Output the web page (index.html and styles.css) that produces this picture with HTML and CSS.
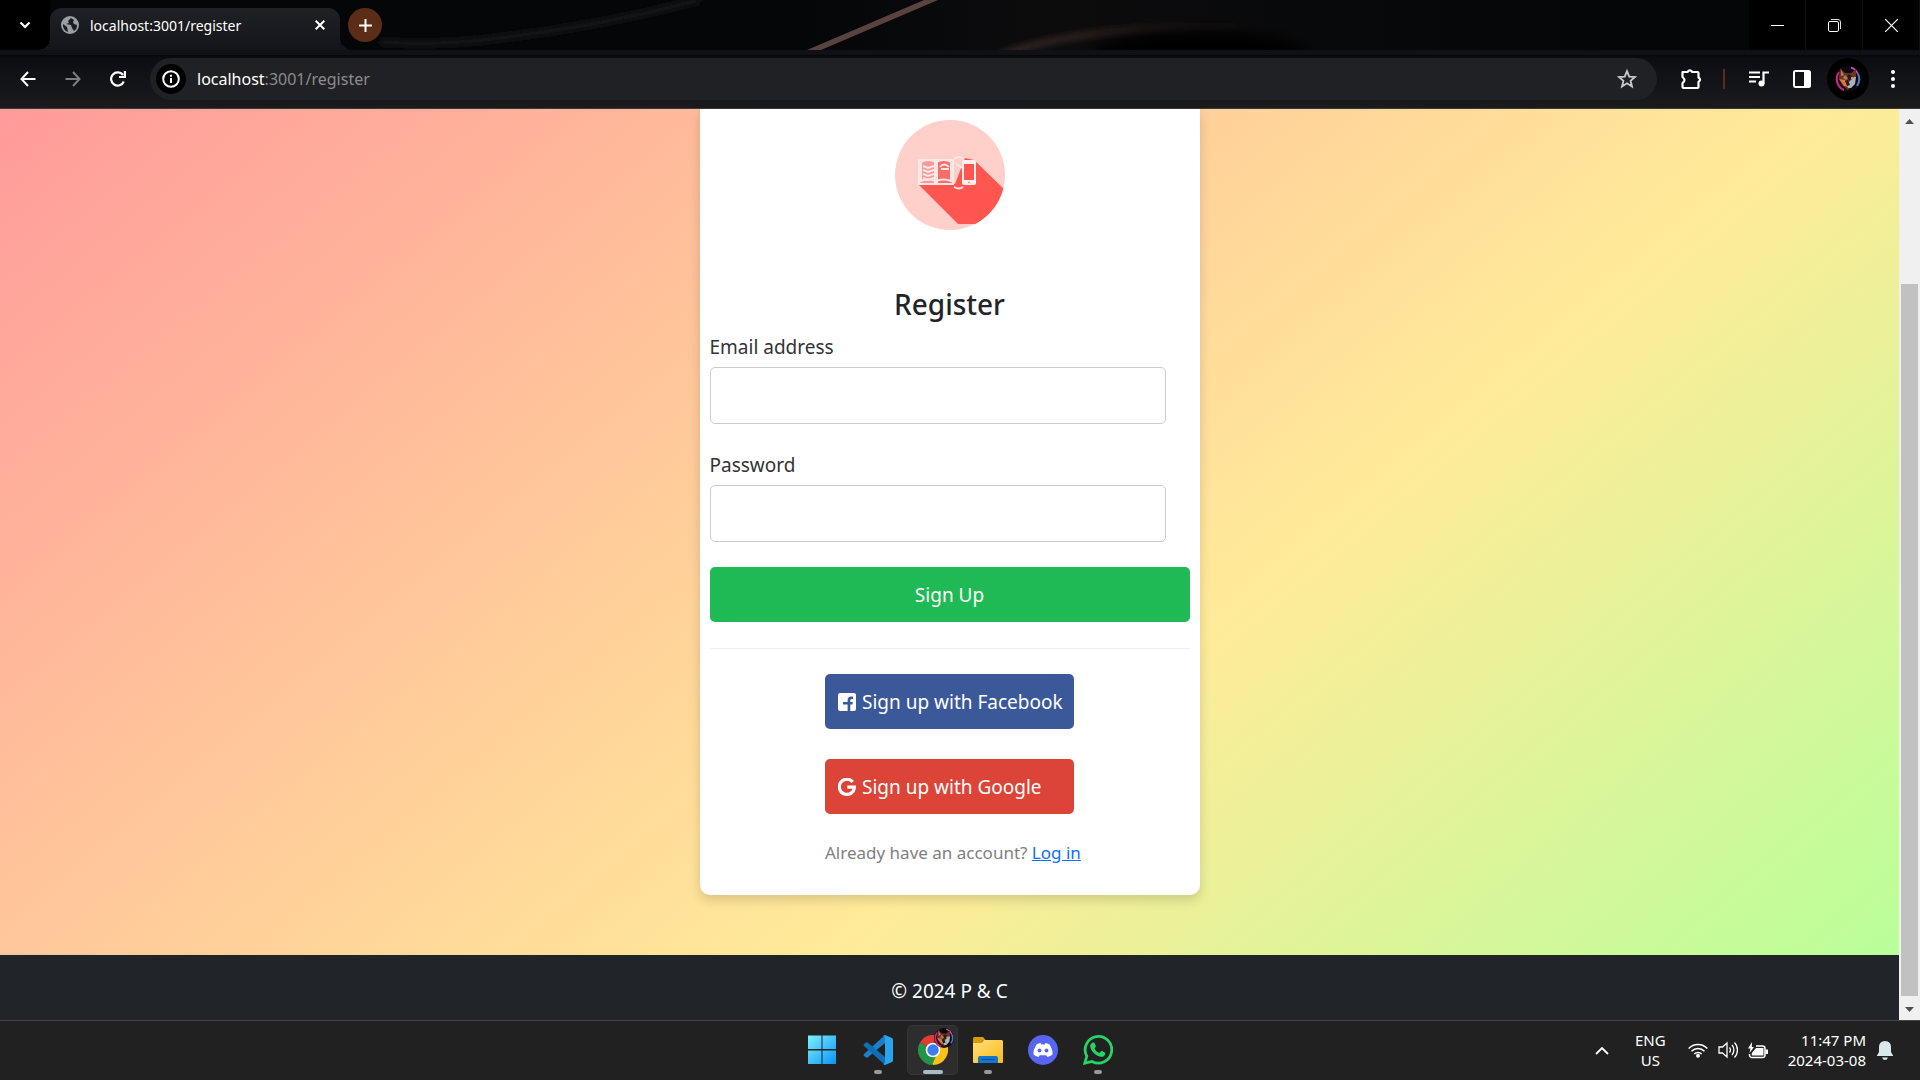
FILE: index.html
```html
<!DOCTYPE html>
<html lang="en">
<head>
<meta charset="utf-8">
<title>localhost:3001/register</title>
<link rel="stylesheet" href="styles.css">
</head>
<body>
<svg class="defs" aria-hidden="true">
  <defs>
    <symbol id="wolf" viewBox="0 0 26 26">
      <circle cx="13" cy="13" r="13" fill="#0d0911"/>
      <path d="M4 6A12 12 0 0 0 9 24" fill="none" stroke="#d8208c" stroke-width="2"/>
      <path d="M16 1.500A12 12 0 0 1 23 8" fill="none" stroke="#e04bc8" stroke-width="1.500"/>
      <path d="M23 8A12 12 0 0 1 22 20" fill="none" stroke="#4a78c8" stroke-width="2"/>
      <path d="M5 2l5 5 6 0 5-4 0 9-3 7-5 5-6-5-3-7z" fill="#6b3526"/>
      <path d="M6 4l3 5-3 1z" fill="#c47a62"/>
      <path d="M4 13l6 1 3 7-4-1z" fill="#e07830"/>
      <path d="M13 8l4 2-2 5-3-3z" fill="#241a20"/>
      <path d="M15 15l4-4 2 0-1 7-4 4-3 0-1-4z" fill="#a9b4ba"/>
      <path d="M10 15l2 5 3-1-2-5z" fill="#2a1c1e"/>
      <path d="M10 9l3 3-2 2-3-2z" fill="#b87850"/>
      <circle cx="17" cy="12" r="1" fill="#f2c32e"/>
    </symbol>
  </defs>
</svg>

<header class="browser">
  <div class="tabstrip">
    <svg class="strip-art" viewBox="0 0 1920 50" preserveAspectRatio="none" aria-hidden="true">
      <defs>
        <filter id="soft" x="-20%" y="-50%" width="140%" height="200%"><feGaussianBlur stdDeviation="3"/></filter>
        <filter id="softer" x="-20%" y="-80%" width="140%" height="260%"><feGaussianBlur stdDeviation="7"/></filter>
        <linearGradient id="sheen" x1="0" x2="1"><stop offset="0" stop-color="#0c0c0d" stop-opacity="0"/><stop offset=".3" stop-color="#0c0c0d"/><stop offset="1" stop-color="#0c0c0d" stop-opacity="0"/></linearGradient>
        <linearGradient id="glow" gradientUnits="userSpaceOnUse" x1="1000" y1="0" x2="1260" y2="0"><stop offset="0" stop-color="#3a2826"/><stop offset="1" stop-color="#3a2826" stop-opacity="0"/></linearGradient>
      </defs>
      <path d="M380 42Q440 46 500 38Q600 26 700 0" fill="none" stroke="#1b1b1d" stroke-width="5" filter="url(#soft)"/>
      <path d="M800 0h800v50H800z" fill="url(#sheen)"/>
      <path d="M1000 56Q1080 24 1260 26" fill="none" stroke="url(#glow)" stroke-width="7" filter="url(#soft)"/>
      <ellipse cx="1200" cy="56" rx="110" ry="24" fill="#000" filter="url(#softer)"/>
      <path d="M807 50L924 0h14L821 50z" fill="#584340"/>
    </svg>
    <button class="icon-btn tab-search" aria-label="Search tabs"><svg width="12" height="8" viewBox="0 0 12 8"><path d="M1.500 1.500L6 6l4.500-4.500" fill="none" stroke="#fff" stroke-width="2.200"/></svg></button>
    <div class="tab">
      <svg width="18" height="18" viewBox="0 0 18 18"><circle cx="9" cy="9" r="9" fill="#9aa0a6"/><path d="M2 8l4 3 1 5c-3-1-5.500-4-5-8zM10 2l-3 3 1 2-3 1 5 1 1 3 2 3c2-1 3-3 3-6l-3-1-1-2 1-2zM13 3l3 4" fill="#1c1d21"/></svg>
      <span class="tab-title">localhost:3001/register</span>
      <button class="icon-btn" aria-label="Close tab"><svg width="10" height="10" viewBox="0 0 10 10"><path d="M.7.7l8.600 8.600M9.300.7L.7 9.300" stroke="#fff" stroke-width="2"/></svg></button>
    </div>
    <button class="icon-btn new-tab" aria-label="New tab"><svg width="13" height="13" viewBox="0 0 13 13"><path d="M6.500 0v13M0 6.500h13" stroke="#fff" stroke-width="2"/></svg></button>
    <div class="window-controls">
      <button class="icon-btn" aria-label="Minimize"><svg width="13" height="13" viewBox="0 0 13 13"><path d="M0 6.500h13" stroke="#fff"/></svg></button>
      <button class="icon-btn" aria-label="Restore"><svg width="13" height="13" viewBox="0 0 13 13"><rect x=".5" y="2.500" width="10" height="10" rx="1.500" fill="none" stroke="#fff"/><path d="M3 .5h7a2.500 2.500 0 0 1 2.500 2.500v7" fill="none" stroke="#ddd"/></svg></button>
      <button class="icon-btn" aria-label="Close"><svg width="13" height="13" viewBox="0 0 13 13"><path d="M0 0l13 13M13 0L0 13" stroke="#fff" stroke-width="1.200"/></svg></button>
    </div>
  </div>

  <div class="toolbar">
    <button class="icon-btn" aria-label="Back"><svg width="16" height="16" viewBox="0 0 16 16"><path d="M15.500 8H2M8 1L1.500 8 8 15" fill="none" stroke="#fff" stroke-width="2"/></svg></button>
    <button class="icon-btn" aria-label="Forward"><svg width="16" height="16" viewBox="0 0 16 16"><path d="M.5 8H14M8 1l6.500 7L8 15" fill="none" stroke="#7d7e80" stroke-width="2"/></svg></button>
    <button class="icon-btn" aria-label="Reload"><svg width="16" height="16" viewBox="0 0 16 16"><path d="M13.800 10.500A6.600 6.600 0 1 1 13 4" fill="none" stroke="#fff" stroke-width="2.200"/><path d="M14.900 0v6H9" fill="none" stroke="#fff" stroke-width="2.200"/></svg></button>
    <div class="address">
      <button class="icon-btn site-info" aria-label="Site information"><svg width="18" height="18" viewBox="0 0 18 18"><circle cx="9" cy="9" r="7.800" fill="none" stroke="#fff" stroke-width="2"/><path d="M9 8v5M9 4.800v1.900" stroke="#fff" stroke-width="2"/></svg></button>
      <div class="url"><span class="host">localhost</span>:3001/register</div>
      <button class="icon-btn" aria-label="Bookmark"><svg width="20" height="20" viewBox="0 0 24 24"><path d="M12 2.500l2.700 6.600 7 .5-5.400 4.500 1.700 6.900-6-3.800-6 3.800 1.700-6.900-5.400-4.500 7-.5z" fill="none" stroke="#c7c8ca" stroke-width="2.200"/></svg></button>
    </div>
    <div class="actions">
      <button class="icon-btn" aria-label="Extensions"><svg width="22" height="22" viewBox="0 0 22 22"><path d="M2.500 4h5q2.400-3.200 4.800 0h5.200q1 0 1 1v4.500q3.200 2.200 0 4.400V19q0 1-1 1h-14q-1 0-1-1v-3.800q4-3.100 0-6.200z" fill="none" stroke="#fff" stroke-width="2.200" stroke-linejoin="round"/></svg></button>
      <span class="divider"></span>
      <button class="icon-btn" aria-label="Media controls"><svg width="20" height="16" viewBox="0 0 20 16"><path d="M0 1.500h11M0 6h11M0 10.500h7" stroke="#fff" stroke-width="2.200"/><circle cx="12.500" cy="12.500" r="3" fill="#fff"/><path d="M14.500 12.500V1.500H20" fill="none" stroke="#fff" stroke-width="2.200"/></svg></button>
      <button class="icon-btn" aria-label="Side panel"><svg width="18" height="18" viewBox="0 0 18 18"><rect x="1" y="1" width="16" height="16" rx="1.500" fill="none" stroke="#fff" stroke-width="2"/><path d="M11 1h6v16h-6z" fill="#fff"/></svg></button>
      <button class="icon-btn profile" aria-label="Profile"><svg width="26" height="26"><use href="#wolf"/></svg></button>
      <button class="icon-btn" aria-label="Menu"><svg width="6" height="18" viewBox="0 0 6 18"><g fill="#fff"><circle cx="3" cy="2" r="2"/><circle cx="3" cy="9" r="2"/><circle cx="3" cy="16" r="2"/></g></svg></button>
    </div>
  </div>
</header>

<div class="viewport">
  <div class="page">
    <main class="hero">
      <section class="card">
        <svg class="logo" width="110" height="110" viewBox="0 0 110 110" role="img" aria-label="P &amp; C logo">
          <clipPath id="disc"><circle cx="55" cy="55" r="55"/></clipPath>
          <circle cx="55" cy="55" r="55" fill="#ffcfc9"/>
          <path d="M23 64L63 104h19L112 80V72L79 40 70 38 60 64z" fill="#ff5650" clip-path="url(#disc)"/>
          <g fill="#ff8d88" stroke="#ffe7e5" stroke-width="2">
            <path d="M24 40h16v24H24z" fill="#f49a9c"/>
            <path d="M42 40h16v24H42z" fill="#fa6c68"/>
            <path d="M26 42q7-4 15 0 8-4 15 0v19q-7-3-15 0-8-3-15 0z" fill="none"/>
          </g>
          <path d="M41 41v22M28 46l5 2 6-2M28 50l5 2 6-2M28 54l5 2 6-2M28 58l5 2 6-2M45 47q4-5 9 0M46 49h8" fill="none" stroke="#ffe7e5" stroke-width="2"/>
          <path d="M59 39q5-4 10 0M60 43l7 5M59 67q5 3 9 0" fill="none" stroke="#ffe7e5" stroke-width="2"/>
          <rect x="67" y="40" width="14" height="25" rx="2" fill="#fff0ef"/>
          <path d="M69 44h10v16H69z" fill="#ff5650"/>
          <circle cx="74" cy="62.500" r="1" fill="#ff8d88"/>
        </svg>
        <h1>Register</h1>
        <form class="form">
          <div class="field"><label for="email">Email address</label><input id="email" type="email"></div>
          <div class="field"><label for="password">Password</label><input id="password" type="password"></div>
          <button class="btn btn-primary" type="submit">Sign Up</button>
        </form>
        <hr>
        <div class="social">
          <button class="btn btn-facebook"><svg width="18" height="18" viewBox="0 0 18 18"><path d="M2 0h14a2 2 0 0 1 2 2v14a2 2 0 0 1-2 2h-3.700v-6.600h2.200l.4-2.500h-2.600V7.300c0-.8.400-1.400 1.400-1.400H15V3.700s-1-.2-2-.2c-2.100 0-3.400 1.200-3.400 3.500v1.900H5v2.500h4.600V18H2a2 2 0 0 1-2-2V2a2 2 0 0 1 2-2z" fill="#fff"/></svg>Sign up with Facebook</button>
          <button class="btn btn-google"><svg width="18" height="18" viewBox="0 0 18 18"><path d="M14.800 4A7.600 7.600 0 1 0 16.500 9.200H9.300" fill="none" stroke="#fff" stroke-width="3.200"/></svg>Sign up with Google</button>
          <p>Already have an account? <a href="#login">Log in</a></p>
        </div>
      </section>
    </main>
    <footer class="footer">© 2024 P &amp; C</footer>
  </div>
  <div class="scrollbar" aria-hidden="true">
    <svg width="9" height="5" viewBox="0 0 9 5"><path d="M0 5L4.500 0 9 5z" fill="#505050"/></svg>
    <span class="thumb"></span>
    <svg width="9" height="5" viewBox="0 0 9 5"><path d="M0 0l4.500 5L9 0z" fill="#505050"/></svg>
  </div>
</div>

<div class="taskbar">
  <nav class="apps">
    <button class="app" aria-label="Start"><svg width="30" height="30" viewBox="1 0 30 30"><defs><linearGradient id="win" x1="0" y1="0" x2="1" y2="1"><stop offset="0" stop-color="#7df0ff"/><stop offset="1" stop-color="#0a94f5"/></linearGradient></defs><path d="M1 .5h13.500V14H1zM15.500.5H29V14H15.500zM1 15.500h13.500V29H1zM15.500 15.500H29V29H15.500z" fill="url(#win)"/></svg></button>
    <button class="app running" aria-label="Visual Studio Code"><svg width="30" height="30" viewBox="0 0 30 30"><path d="M22 0v8L4 23 1 21q-1-1 0-2z" fill="#1b80c4"/><path d="M22 30v-8L4 7 1 9q-1 1 0 2z" fill="#0f6fb4"/><path d="M22 0l7 3q1 .5 1 2v20q0 1.500-1 2l-7 3-2-1q2 0 2-2V3q0-2-2-2z" fill="#2ba4ee"/></svg></button>
    <button class="app active running" aria-label="Google Chrome">
      <svg width="30" height="30" viewBox="0 0 30 30"><path d="M15 15L2 7.500A15 15 0 0 1 28 7.500H15z" fill="#e33b2e"/><path d="M15 15l13-7.500A15 15 0 0 1 15 30l-2-3z" fill="#fbc116"/><path d="M15 15l4 4-5 11A15 15 0 0 1 2 7.500z" fill="#259545"/><circle cx="15" cy="15" r="7.300" fill="#fff"/><circle cx="15" cy="15" r="5.700" fill="#3b7ded"/></svg>
      <svg class="badge" width="20" height="20"><use href="#wolf"/></svg>
    </button>
    <button class="app running" aria-label="File Explorer"><svg width="30" height="30" viewBox="0 0 30 30"><defs><linearGradient id="fold" x1="0" y1="0" x2="1" y2="1"><stop offset="0" stop-color="#ffe07a"/><stop offset="1" stop-color="#fbb91d"/></linearGradient></defs><path d="M0 3.500Q0 2 1.500 2H10l3 3.500h-3L8 8H0z" fill="#d99a06"/><path d="M0 8h8l3-3h17.500Q30 5 30 6.500V27q0 1-1 1H1q-1 0-1-1z" fill="url(#fold)"/><path d="M5 28v-5q0-2 2-2h16q2 0 2 2v5z" fill="#1277cc"/><path d="M8.500 24.500h13" stroke="#0a4d92"/></svg></button>
    <button class="app" aria-label="Discord"><svg width="30" height="30" viewBox="0 0 30 30"><circle cx="15" cy="15" r="15" fill="#5865f2"/><path d="M8.500 9.500Q10.500 8.300 12.500 8l.8 1.400h3.400L17.500 8q2 .3 4 1.500Q25 15 24.500 19.500 22.500 21.200 19.500 22l-1.200-1.800h-6.600L10.500 22q-3-.8-5-2.500Q5 15 8.500 9.500z" fill="#fff"/><circle cx="11.500" cy="15.500" r="1.900" fill="#5865f2"/><circle cx="18.500" cy="15.500" r="1.900" fill="#5865f2"/></svg></button>
    <button class="app running" aria-label="WhatsApp"><svg width="30" height="30" viewBox="0 0 30 30"><path d="M1.800 28.200l2-7A13.300 13.300 0 1 1 9 26.400z" fill="none" stroke="#25d366" stroke-width="2.800"/><path d="M10.300 7.500c.6 0 1 0 1.300.7l1.200 2.800c.2.500 0 .9-.3 1.300l-1 1.200c1 2 2.800 3.600 5 4.500l1.300-1.600c.3-.4.700-.5 1.200-.3l2.700 1.300c.5.300.7.500.6 1-.2 2.300-2.200 3.600-4 3.400-5-.6-10-5.200-11-9.800-.4-2 1-4.500 3-4.500z" fill="#25d366"/></svg></button>
  </nav>
  <div class="tray">
    <button class="icon-btn" aria-label="Show hidden icons"><svg width="14" height="9" viewBox="0 0 14 9"><path d="M1 8l6-6 6 6" fill="none" stroke="#fff" stroke-width="1.800"/></svg></button>
    <div class="lang">ENG<br>US</div>
    <div class="status">
      <svg width="20" height="16" viewBox="0 0 20 16"><g fill="none" stroke="#fff" stroke-width="1.500"><path d="M.6 6.500a13 13 0 0 1 18.800 0M3.500 9.300a9 9 0 0 1 13 0M6.300 12a5.200 5.200 0 0 1 7.400 0"/></g><circle cx="10" cy="13.700" r="2" fill="#fff"/></svg>
      <svg width="20" height="18" viewBox="0 0 20 18"><g fill="none" stroke="#fff" stroke-width="1.300"><path d="M1 6h3.500L9 2v14l-4.500-4H1zM11.500 6.500a4 4 0 0 1 0 5M14 4a7.500 7.500 0 0 1 0 10M16.500 1.500a11 11 0 0 1 0 15"/></g></svg>
      <svg width="20" height="17" viewBox="0 0 20 17"><path d="M8 4h6.500A2.500 2.500 0 0 1 17 6.500V13a2.500 2.500 0 0 1-2.500 2.500H4A2.500 2.500 0 0 1 1.500 13v-1" fill="none" stroke="#fff" stroke-width="1.500"/><path d="M8 6h7.500v7.500H3.800V11zM17.500 7.500H20v4.500h-2.500zM4 0L0 6.500h2.500L1.500 11 6 5H3.800z" fill="#fff"/></svg>
    </div>
    <div class="clock">11:47 PM<br>2024-03-08</div>
    <button class="icon-btn" aria-label="Notifications"><svg width="16" height="19" viewBox="0 0 16 19"><path d="M8 0q6 .5 6 6v5l2 3.500V15H0v-.5L2 11V6Q2 .5 8 0z" fill="#d9e8ea"/><path d="M5 16.500h6q-1 2.500-3 2.500t-3-2.500z" fill="#d9e8ea"/></svg></button>
  </div>
</div>
</body>
</html>
```
FILE: styles.css
```css
* {
  box-sizing: border-box;
}

body {
  margin: 0;
  height: 100vh;
  display: flex;
  flex-direction: column;
  overflow: hidden;
  font-family: "Noto Sans", "Open Sans", sans-serif;
  font-size: 19px;
  color: #212529;
}

button {
  font: inherit;
  border: 0;
  padding: 0;
  cursor: pointer;
}

svg {
  display: block;
  flex: none;
}

.defs {
  position: absolute;
  width: 0;
  height: 0;
}

.icon-btn {
  background: none;
  display: flex;
  align-items: center;
  justify-content: center;
  flex: none;
}

/* Browser window */
.browser {
  flex: none;
  background: #101116;
}

.tabstrip {
  position: relative;
  height: 50px;
  display: flex;
  align-items: center;
  background: #050608;
}

.strip-art {
  position: absolute;
  inset: 0;
  width: 100%;
  height: 100%;
}

.tabstrip > :not(.strip-art) {
  position: relative;
}

.tab-search {
  width: 50px;
  height: 50px;
  background: #000;
}

.tab {
  align-self: flex-end;
  width: 290px;
  height: 42px;
  padding: 0 15px 8px 11px;
  display: flex;
  align-items: center;
  gap: 11px;
  border-radius: 12px 12px 0 0;
  background: linear-gradient(#202125, #14151a);
  color: #fff;
  font-size: 14px;
}

.tab::before,
.tab::after {
  content: "";
  position: absolute;
  bottom: 0;
  width: 12px;
  height: 12px;
}

.tab::before {
  right: 100%;
  background: radial-gradient(circle at 0 0, transparent 12px, #14151a 12px);
}

.tab::after {
  left: 100%;
  background: radial-gradient(circle at 100% 0, transparent 12px, #14151a 12px);
}

.tab-title {
  flex: 1;
}

.new-tab {
  width: 34px;
  height: 34px;
  margin-left: 8px;
  border-radius: 50%;
  background: #5c2d16;
}

.window-controls {
  margin-left: auto;
  padding-right: 1px;
  display: flex;
  gap: 1px;
  background: #101113;
}

.window-controls .icon-btn {
  width: 56px;
  height: 50px;
  background: #000;
}

.toolbar {
  display: flex;
  align-items: center;
  height: 59px;
  padding: 8px 24px 8px 20px;
  background: linear-gradient(#101116 5px, #050608 5px, #0c0d12 8px, #1b1b1e);
  border-bottom: 1px solid #3a393c;
}

.toolbar > .icon-btn {
  width: 16px;
  margin-right: 29px;
}

.address {
  flex: 1;
  height: 42px;
  padding: 0 20px 0 6px;
  display: flex;
  align-items: center;
  gap: 11px;
  border-radius: 21px;
  background: #202124;
}

.toolbar > .icon-btn + .address {
  margin-left: -5px;
}

.site-info {
  width: 30px;
  height: 30px;
  border-radius: 50%;
  background: #000;
}

.url {
  flex: 1;
  color: #8b8c8f;
  font-size: 16px;
}

.host {
  color: #fff;
}

.actions {
  display: flex;
  align-items: center;
  margin-left: 23px;
  gap: 24px;
}

.divider {
  width: 2px;
  height: 20px;
  margin-left: -3px;
  background: #5c2d16;
}

.profile {
  width: 42px;
  height: 42px;
  margin: 0 -3px 0 -8px;
  border-radius: 50%;
  background: #000;
}

/* Page */
.viewport {
  flex: 1;
  min-height: 0;
  display: flex;
}

.page {
  flex: 1;
  display: flex;
  flex-direction: column;
}

.hero {
  flex: 1;
  display: flex;
  justify-content: center;
  align-items: flex-start;
  padding-bottom: 60px;
  background: linear-gradient(140deg, #ff9b9b, #ffeb99 63%, #b9ff99);
}

.card {
  width: 500px;
  padding: 11px 10px 27px;
  display: flex;
  flex-direction: column;
  background: #fff;
  border-radius: 0 0 10px 10px;
  box-shadow: 0 5px 12px rgba(0, 0, 0, 0.15);
}

.logo {
  align-self: center;
}

h1 {
  margin: 55px 0 8px;
  font-size: 28px;
  font-weight: 500;
  line-height: 38px;
  text-align: center;
}

.form {
  display: flex;
  flex-direction: column;
  gap: 25px;
}

.field {
  display: flex;
  flex-direction: column;
  gap: 4px;
  color: #333;
}

.field label {
  line-height: 32px;
}

.field input {
  width: 95%;
  height: 57px;
  padding: 12px;
  border: 1px solid #ccc;
  border-radius: 5px;
  font: inherit;
}

.btn {
  height: 55px;
  border-radius: 5px;
  color: #fff;
}

.btn-primary {
  background: #1fb955;
}

hr {
  width: 100%;
  margin: 26px 0 25px;
  border: 0;
  border-top: 1px solid #eee;
}

.social {
  align-self: center;
  width: 249px;
  display: flex;
  flex-direction: column;
  gap: 30px;
}

.social .btn {
  display: flex;
  align-items: center;
  gap: 6px;
  padding: 0 13px;
  white-space: nowrap;
}

.btn-facebook {
  background: #3b5998;
}

.btn-google {
  background: #db4437;
}

.social p {
  margin: -6px 0 0;
  font-size: 17px;
  line-height: 30px;
  color: #808080;
  white-space: nowrap;
}

.social a {
  color: #0d6efd;
}

.footer {
  padding: 21px 0 14px;
  line-height: 30px;
  background: #212529;
  color: #fff;
  text-align: center;
}

.scrollbar {
  width: 21px;
  padding: 10px 0 8px;
  display: flex;
  flex-direction: column;
  align-items: center;
  background: #f0f0f0;
}

.thumb {
  flex: 1;
  width: 17px;
  margin: 160px 0 11px;
  background: #c1c1c1;
}

/* Taskbar */
.taskbar {
  flex: none;
  height: 60px;
  padding-bottom: 1px;
  display: grid;
  grid-template-columns: 1fr auto 1fr;
  background: #212121;
  border-top: 1px solid #444546;
  color: #fff;
}

.apps {
  grid-column: 2;
  display: flex;
  align-items: center;
}

.app {
  position: relative;
  width: 55px;
  height: 50px;
  display: flex;
  align-items: center;
  justify-content: center;
  background: none;
}

.active::before {
  content: "";
  position: absolute;
  inset: 0 2px;
  border: 1px solid #363636;
  border-radius: 5px;
  background: #2d2d2d;
}

.active svg {
  position: relative;
}

.active .badge {
  position: absolute;
  top: 3px;
  right: 6px;
}

.running::after {
  content: "";
  position: absolute;
  bottom: 1px;
  width: 8px;
  height: 4px;
  border-radius: 2px;
  background: #999;
}

.active::after {
  width: 20px;
  background: #a9bcc4;
}

.tray {
  grid-column: 3;
  justify-self: end;
  display: flex;
  align-items: center;
  padding-right: 27px;
  font-size: 15px;
  line-height: 20px;
}

.lang {
  margin: 0 22px 0 26px;
  text-align: center;
}

.status {
  display: flex;
  align-items: center;
  gap: 10px;
  margin-right: 20px;
}

.clock {
  margin-right: 11px;
  text-align: right;
}
```
